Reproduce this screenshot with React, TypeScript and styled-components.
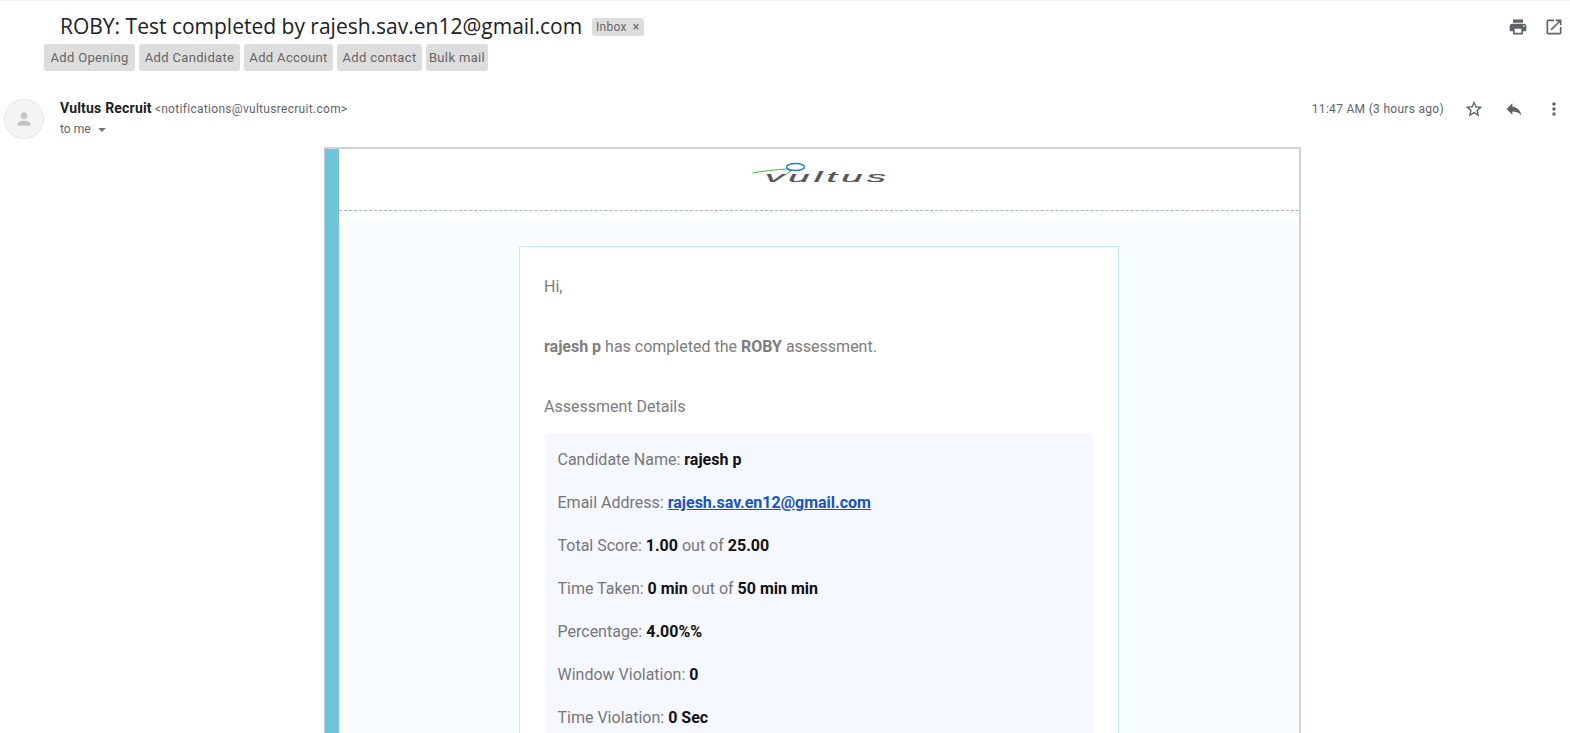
import React from "react";
import styled, { createGlobalStyle } from "styled-components";

const Global = createGlobalStyle`
  html, body { margin: 0; padding: 0; height: 733px; overflow: hidden; background: #fff; }
  body { font-family: Roboto, "Liberation Sans", sans-serif; }
`;

const Page = styled.div`
  height: 733px;
  overflow: hidden;
  border-top: 1px solid #f1f1f1;
  box-sizing: border-box;
  position: relative;
`;
const SubjectRow = styled.div`
  display: flex;
  align-items: center;
  height: 33px;
  padding: 9px 6px 0 60px;
  box-sizing: content-box;
`;
const Title = styled.h1`
  margin: 0;
  font-family: "Open Sans", Roboto, sans-serif;
  font-size: 21px;
  font-weight: 400;
  color: #202124;
  line-height: 33px;
  white-space: nowrap;
`;
const Tag = styled.span`
  display: inline-flex;
  align-items: center;
  gap: 6px;
  height: 18px;
  margin-left: 10px;
  padding: 0 5px 0 4px;
  border-radius: 3px;
  background: #ddd;
  color: #666;
  font-size: 12px;
  letter-spacing: 0.25px;
`;
const Spacer = styled.div`
  flex: 1;
`;
const IconButton = styled.span<{ $ml?: number; $color?: string }>`
  display: inline-flex;
  margin-left: ${(p) => p.$ml ?? 0}px;
  color: ${(p) => p.$color ?? "#5f6368"};
`;
const Chips = styled.div`
  display: flex;
  gap: 4px;
  padding-left: 44px;
  margin-top: 1px;
`;
const Chip = styled.button<{ $w: number }>`
  width: ${(p) => p.$w}px;
  height: 27px;
  padding: 0;
  border: 0;
  border-radius: 3px;
  background: #ddd;
  color: #666;
  font: 400 13px Roboto, sans-serif;
  letter-spacing: 0.35px;
`;
const MessageHeader = styled.div`
  display: flex;
  height: 48px;
  padding: 28px 6px 0 4px;
`;
const Avatar = styled.div`
  width: 40px;
  height: 40px;
  box-sizing: border-box;
  border: 1px solid #e5e5e5;
  border-radius: 50%;
  background: #f5f5f5;
  color: #c4c4c4;
  display: flex;
  align-items: center;
  justify-content: center;
`;
const Sender = styled.div`
  margin: -1px 0 0 16px;
  display: flex;
  flex-direction: column;
  gap: 1px;
`;
const SenderLine = styled.div`
  height: 20px;
  line-height: 20px;
  font-size: 12px;
  color: #5f6368;
  white-space: nowrap;
`;
const SenderName = styled.b`
  font-size: 14px;
  font-weight: 700;
  color: #202124;
  letter-spacing: 0.2px;
`;
const SenderAddress = styled.span`
  letter-spacing: 0.3px;
`;
const Caret = styled.i`
  display: inline-block;
  margin-left: 7px;
  border: 4px solid transparent;
  border-top-color: #777;
  border-bottom: 0;
  vertical-align: middle;
`;
const Time = styled.span`
  font-size: 12px;
  line-height: 20px;
  color: #5f6368;
  letter-spacing: 0.3px;
`;
const Meta = styled.div`
  display: flex;
  align-items: flex-start;
  height: 20px;
`;
const MailWrap = styled.div`
  padding-left: 324px;
`;
const Mail = styled.div`
  width: 977px;
  box-sizing: border-box;
  height: 620px;
  border-top: 2px solid #d3d3d3;
  border-right: 2px solid #d3d3d3;
  border-left: 1px solid #c9c9c9;
  display: flex;
`;
const Stripe = styled.div`
  width: 14px;
  background: #6ec6de;
`;
const MailBody = styled.div`
  flex: 1;
  min-width: 0;
`;
const MailHead = styled.div`
  height: 61px;
  border-bottom: 1px dashed #a0b9d2;
  display: flex;
  justify-content: center;
  align-items: flex-start;
`;
const Logo = styled.svg`
  width: 140px;
  height: 40px;
  margin-top: 10px;
  margin-left: -2px;
`;
const Backdrop = styled.div`
  margin-top: 10px;
  height: 560px;
  background: #f8fdff;
  padding: 25px 0 0 180px;
`;
const Card = styled.div`
  width: 600px;
  box-sizing: border-box;
  height: 520px;
  background: #fff;
  border: 1px solid #bfe9fb;
  padding: 30px 25px 0;
  font-size: 16px;
  line-height: 20px;
  color: #7d7d7d;
`;
const Para = styled.p`
  margin: 0 0 40px -1px;
  strong {
    font-weight: 700;
  }
`;
const Details = styled.div`
  margin-top: -24px;
  background: #f5f8ff;
  height: 320px;
  padding: 5px 12px 0 12.5px;
`;
const Row = styled.div`
  height: 43px;
  line-height: 43px;
  color: #777;
  white-space: nowrap;
  b {
    font-weight: 700;
    color: #111;
  }
  a {
    font-weight: 700;
    color: #1a52c4;
    text-decoration: underline;
  }
`;

const Ic = ({ d, size = 20 }: { d: string; size?: number }) => (
  <svg width={size} height={size} viewBox="0 0 24 24" fill="currentColor">
    <path d={d} />
  </svg>
);

const P = {
  print: "M19 8H5c-1.66 0-3 1.34-3 3v6h4v4h12v-4h4v-6c0-1.66-1.34-3-3-3zm-3 11H8v-5h8v5zm3-7c-.55 0-1-.45-1-1s.45-1 1-1 1 .45 1 1-.45 1-1 1zm-1-9H6v4h12V3z",
  open: "M19 19H5V5h7V3H5c-1.11 0-2 .9-2 2v14c0 1.1.89 2 2 2h14c1.1 0 2-.9 2-2v-7h-2v7zM14 3v2h3.59l-9.83 9.83 1.41 1.41L19 6.41V10h2V3h-7z",
  star: "M22 9.24l-7.19-.62L12 2 9.19 8.63 2 9.24l5.46 4.73L5.82 21 12 17.27 18.18 21l-1.63-7.03L22 9.24zM12 15.4l-3.76 2.27 1-4.28-3.32-2.88 4.38-.38L12 6.1l1.71 4.04 4.38.38-3.32 2.88 1 4.28L12 15.4z",
  reply: "M10 9V5l-7 7 7 7v-4.1c5 0 8.5 1.6 11 5.1-1-5-4-10-11-11z",
  more: "M12 8c1.1 0 2-.9 2-2s-.9-2-2-2-2 .9-2 2 .9 2 2 2zm0 2c-1.1 0-2 .9-2 2s.9 2 2 2 2-.9 2-2-.9-2-2-2zm0 6c-1.1 0-2 .9-2 2s.9 2 2 2 2-.9 2-2-.9-2-2-2z",
  person: "M12 12c2.21 0 4-1.79 4-4s-1.79-4-4-4-4 1.79-4 4 1.79 4 4 4zm0 2c-2.67 0-8 1.34-8 4v2h16v-2c0-2.66-5.33-4-8-4z",
};

const chips: [string, number][] = [
  ["Add Opening", 91],
  ["Add Candidate", 101],
  ["Add Account", 89],
  ["Add contact", 85],
  ["Bulk mail", 62],
];

export default function App() {
  return (
    <Page>
      <Global />
      <SubjectRow>
        <Title>ROBY: Test completed by rajesh.sav.en12@gmail.com</Title>
        <Tag>
          Inbox <span>×</span>
        </Tag>
        <Spacer />
        <IconButton>
          <Ic d={P.print} />
        </IconButton>
        <IconButton $ml={16}>
          <Ic d={P.open} />
        </IconButton>
      </SubjectRow>
      <Chips>
        {chips.map(([label, w]) => (
          <Chip key={label} $w={w}>
            {label}
          </Chip>
        ))}
      </Chips>
      <MessageHeader>
        <Avatar>
          <Ic d={P.person} size={20} />
        </Avatar>
        <Sender>
          <SenderLine>
            <SenderName>Vultus Recruit</SenderName>{" "}
            <SenderAddress>&lt;notifications@vultusrecruit.com&gt;</SenderAddress>
          </SenderLine>
          <SenderLine>
            to me
            <Caret />
          </SenderLine>
        </Sender>
        <Spacer />
        <Meta>
          <Time>11:47 AM (3 hours ago)</Time>
          <IconButton $ml={20}>
            <Ic d={P.star} />
          </IconButton>
          <IconButton $ml={20}>
            <Ic d={P.reply} />
          </IconButton>
          <IconButton $ml={20}>
            <Ic d={P.more} />
          </IconButton>
        </Meta>
      </MessageHeader>
      <MailWrap>
        <Mail>
          <Stripe />
          <MailBody>
            <MailHead>
              <Logo viewBox="0 0 140 40">
                <path d="M4.5 14 C16 12 28 10.5 38 10" stroke="#47b54a" strokeWidth="1" fill="none" />
                <path d="M38 10 L43 12 L37 16" stroke="#47b54a" strokeWidth="1" fill="none" />
                <ellipse cx="47.5" cy="8" rx="9" ry="3.5" fill="none" stroke="#2f78c8" strokeWidth="1.4" />
                <text
                  x="17"
                  y="23"
                  fontFamily="Liberation Sans, sans-serif"
                  fontStyle="italic"
                  fontSize="14"
                  fill="#555"
                  stroke="#555"
                  strokeWidth="0.2"
                  letterSpacing="1.5"
                  textLength="125"
                  lengthAdjust="spacingAndGlyphs"
                >
                  vultus
                </text>
              </Logo>
            </MailHead>
            <Backdrop>
              <Card>
                <Para>Hi,</Para>
                <Para>
                  <strong>rajesh p</strong> has completed the <strong>ROBY</strong> assessment.
                </Para>
                <Para>Assessment Details</Para>
                <Details>
                  <Row>
                    Candidate Name: <b>rajesh p</b>
                  </Row>
                  <Row>
                    Email Address: <a href="#">rajesh.sav.en12@gmail.com</a>
                  </Row>
                  <Row>
                    Total Score: <b>1.00</b> out of <b>25.00</b>
                  </Row>
                  <Row>
                    Time Taken: <b>0 min</b> out of <b>50 min min</b>
                  </Row>
                  <Row>
                    Percentage: <b>4.00%%</b>
                  </Row>
                  <Row>
                    Window Violation: <b>0</b>
                  </Row>
                  <Row>
                    Time Violation: <b>0 Sec</b>
                  </Row>
                </Details>
              </Card>
            </Backdrop>
          </MailBody>
        </Mail>
      </MailWrap>
    </Page>
  );
}
